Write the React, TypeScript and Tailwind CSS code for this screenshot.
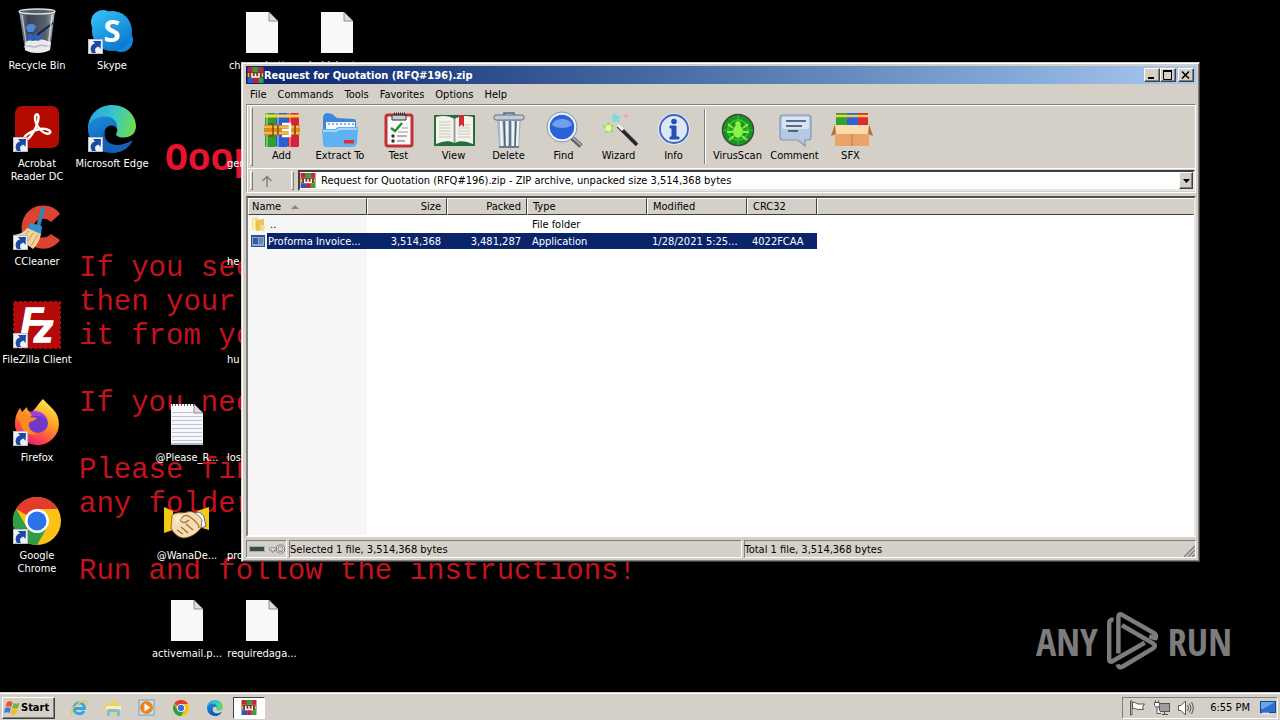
import React from "react";

type Kids = { children?: React.ReactNode };

const sunken = "border border-t-[#808080] border-l-[#808080] border-r-white border-b-white";
const raised =
  "border border-t-white border-l-white border-r-[#404040] border-b-[#404040] shadow-[inset_-1px_-1px_0_#808080]";

/* ---------- Desktop icons ---------- */

function Shortcut() {
  return (
    <g>
      <rect x="0.5" y="32.5" width="14" height="14" fill="#eef1f6" stroke="#b9bec8" />
      <path d="M4 46 C1.500 42 2.500 37.500 7 36.500 L5 34 L13 34 L12.500 42 L10.500 39.500 C7.500 40.500 6 42.500 8 46 Z" fill="#1d4aa0" />
    </g>
  );
}

function Art({ children }: Kids) {
  return (
    <svg viewBox="0 0 48 48" className="h-12 w-12 shrink-0 overflow-visible" aria-hidden="true">
      {children}
    </svg>
  );
}

function RecycleBin() {
  return (
    <Art>
      <defs>
        <linearGradient id="binBody">
          <stop offset="0" stopColor="#8e9aa8" />
          <stop offset="0.25" stopColor="#39434f" />
          <stop offset="0.75" stopColor="#566270" />
          <stop offset="1" stopColor="#aeb7c1" />
        </linearGradient>
      </defs>
      <path d="M6 4 L42 4 L37 43 C30 47 18 47 12 43 Z" fill="url(#binBody)" />
      <path d="M12 36 C16 31 22 35 26 33 C31 31 35 35 38 35 L37 43 C30 47 18 47 12 43 Z" fill="#e8eaec" />
      <path d="M11 40 C18 37 20 42 25 39 C30 37 33 40 37 39" fill="none" stroke="#b4b8bd" strokeWidth="1.5" />
      <path d="M13 21 C14 16 21 15 23 20 L20 25 L15 25 Z" fill="#4f86d8" />
      <path d="M20 31 C20 26 26 24 29 28 L26 34 Z M14 27 L19 27 L21 34 L15 33 Z" fill="#2d62bd" />
      <path d="M24 28 L40 16" stroke="#12233f" strokeWidth="2" />
      <ellipse cx="24" cy="4.5" rx="18" ry="2.5" fill="#56616e" stroke="#d9dee3" strokeWidth="1.3" />
      <path d="M9 8 L14 42" stroke="#dfe5ea" strokeWidth="1.3" opacity="0.7" />
      <path d="M39 8 L35 42" stroke="#f2f4f6" strokeWidth="1.6" opacity="0.7" />
    </Art>
  );
}

function Skype() {
  return (
    <Art>
      <defs>
        <linearGradient id="sky" x2="0.6" y2="1">
          <stop offset="0" stopColor="#37c3f5" />
          <stop offset="1" stopColor="#0b78d1" />
        </linearGradient>
      </defs>
      <circle cx="15" cy="15" r="12" fill="#2fb9f2" />
      <circle cx="33" cy="33" r="12" fill="#1187dc" />
      <circle cx="24" cy="24" r="20" fill="url(#sky)" />
      <text x="24" y="35" textAnchor="middle" fontSize="31" className="fill-white font-['Open_Sans',sans-serif] font-bold">S</text>
      <Shortcut />
    </Art>
  );
}

function Acrobat() {
  return (
    <Art>
      <rect x="2" y="1" width="44" height="42" rx="7" fill="#b30b00" />
      <path
        d="M12 34 C9 31 20 25 27 24 C35 23 40 27 36 28.500 C30 30 22 20 22 13 C22 8 26 8 25.500 13 C25 20 18 33 13.500 34.500 Z"
        fill="none"
        stroke="#fff"
        strokeWidth="2.4"
        strokeLinejoin="round"
      />
      <Shortcut />
    </Art>
  );
}

function EdgeShape() {
  return (
    <g>
      <defs>
        <linearGradient id="edgeTop" x1="0" y1="0.4" x2="1" y2="0.6">
          <stop offset="0" stopColor="#2ba6dc" />
          <stop offset="0.5" stopColor="#37c6c9" />
          <stop offset="1" stopColor="#72dc4c" />
        </linearGradient>
        <linearGradient id="edgeBot" x2="0.5" y2="1">
          <stop offset="0" stopColor="#1c8fdd" />
          <stop offset="1" stopColor="#0d58ad" />
        </linearGradient>
      </defs>
      <path d="M0 24 C0 9 11 0 24 0 C39 0 48 11 48 21 C48 29 42 32.500 36 32.500 C30 32.500 27 30.500 28.500 28 C31 24 28 18 20 18 C11 18 4 22 0 24 Z" fill="url(#edgeTop)" />
      <path d="M0 24 C1 15 10 11.500 17 11.500 C26 11.500 30 18 29 24 C27 19 18 19 16.500 27 C15 37 26 47 40 41 C36 46 30 48 24 48 C10 48 0 37 0 24 Z" fill="url(#edgeBot)" />
      <path d="M16.500 27 C15 37 26 45 43 36 C44 35 45 36 44 37 C38 47 27 49 20 46 C10 41 11 29 20 20 C18 22 17 24 16.500 27 Z" fill="#1660b4" />
    </g>
  );
}

function CCleaner() {
  return (
    <Art>
      <path d="M47 11 L38 19 C33 13 21 15 20 25 C20 34 31 38 38 31 L47 37 C40 48 24 48 15 40 C5 31 7 12 20 5 C30 0 42 3 47 11 Z" fill="#dc4430" />
      <path d="M30 6 L25 24" stroke="#2f83bf" strokeWidth="4" strokeLinecap="round" />
      <path d="M17 20 L29 23 L28 32 L14 27 Z" fill="#3692cf" />
      <path d="M14 25 L28 31 C27 37 24 42 20 46 L1 32 C7 31 11 29 14 25 Z" fill="#f2d49a" />
      <path d="M16 28 L8 37 M20 30 L13 41 M25 31 L18 43" stroke="#c69b56" strokeWidth="1" />
      <Shortcut />
    </Art>
  );
}

function FileZilla() {
  return (
    <Art>
      <rect x="1" y="1" width="46" height="46" fill="#b40a0a" stroke="#b40a0a" strokeWidth="2" strokeDasharray="3 2" />
      <text x="8" y="33" fontSize="36" strokeWidth="1.5" className="fill-white stroke-white font-['Liberation_Sans',sans-serif] font-bold italic">F</text>
      <text x="21" y="41" fontSize="38" strokeWidth="1.5" className="fill-white stroke-white font-['Liberation_Sans',sans-serif] font-bold italic">z</text>
      <Shortcut />
    </Art>
  );
}

function Firefox() {
  return (
    <Art>
      <defs>
        <linearGradient id="fox" x1="0.8" y1="0" x2="0.3" y2="1">
          <stop offset="0" stopColor="#fff04a" />
          <stop offset="0.45" stopColor="#ff9a26" />
          <stop offset="0.75" stopColor="#ff4b46" />
          <stop offset="1" stopColor="#e4197c" />
        </linearGradient>
      </defs>
      <path d="M30 0 C34 5 40 9 43 14 C47 21 47 31 42 37 C36 45 27 48 18 45 C8 42 2 34 2 25 C2 18 4 13 7 9 L9 13 L14 8 C14 11 16 13 19 13 C23 9 25 5 30 0 Z" fill="url(#fox)" />
      <circle cx="25" cy="24" r="10" fill="#7139c9" />
      <path d="M16 13 C24 10 33 14 34 21 C30 16 25 17 20 17 Z" fill="#9a3fe0" />
      <path d="M3 17 C8 14 14 15 17 18 L24 19 C22 22 18 22 16 24 C15 30 19 34 25 35 C15 38 8 32 8 24 Z" fill="#ff8a1f" />
      <Shortcut />
    </Art>
  );
}

function ChromeShape() {
  return (
    <g>
      <circle cx="24" cy="24" r="24" fill="#fbc116" />
      <path d="M24 24 L3.200 12 A24 24 0 0 1 44.800 12 L24 12 Z" fill="#e33b2e" />
      <path d="M3.200 12 A24 24 0 0 0 24 48 L34.400 30 L24 24 L13.600 30 Z" fill="#2c9f48" />
      <circle cx="24" cy="24" r="12" fill="#fff" />
      <circle cx="24" cy="24" r="9.500" fill="#2c73e8" />
    </g>
  );
}

function Page({ lined = false }: { lined?: boolean }) {
  return (
    <Art>
      <path d="M8 5 L31 5 L40 14 L40 46 L8 46 Z" fill="#f8f8f8" />
      <path d="M31 5 L40 14 L31 14 Z" fill="#dcdcdc" stroke="#777" strokeWidth="0.8" />
      {lined && (
        <g>
          <path d="M9 13.500 H30 M9 17.500 H39 M9 21.500 H39 M9 25.500 H39 M9 29.500 H39 M9 33.500 H39 M9 37.500 H39 M9 41.500 H39" stroke="#b7c4de" strokeWidth="1" />
          <path d="M9 6 H31" stroke="#555" strokeWidth="2" strokeDasharray="1 2" />
          <path d="M8 45 H40" stroke="#9aa3b4" strokeWidth="1.500" />
        </g>
      )}
    </Art>
  );
}

function Handshake() {
  return (
    <Art>
      <path d="M1 10 L10 14 L10 33 L1 36 Z" fill="#f2cb12" />
      <path d="M46 10 L34 14 L39 31 L46 33 Z" fill="#f2cb12" />
      <path d="M31 16 C35 14 39 16 41 20 L43 29 L38 31 Z" fill="#fff" stroke="#4b3a9a" strokeWidth="0.8" />
      <path d="M9 18 C15 14 20 17 24 15 C30 13 36 18 39 23 L38 31 C34 36 29 40 21 41 C16 41 10 36 8 31 Z" fill="#f6dcb0" stroke="#7b5227" strokeWidth="0.8" />
      <path d="M17 23 C20 18 24 17 27 20 C31 23 36 26 36 31 M14 33 L20 37 M18 30 L25 36 M23 27 L30 33 M17 23 C19 27 23 26 26 23" fill="none" stroke="#9b6c37" strokeWidth="1.200" />
      <path d="M11 20 C14 18 17 18 20 18 L14 28 Z" fill="#fdeccb" />
    </Art>
  );
}

type DesktopItem = { label: string; cell: string; art?: React.ReactNode; clipped?: boolean };

const items: DesktopItem[] = [
  { label: "Recycle Bin", cell: "col-start-1 row-start-1", art: <RecycleBin /> },
  { label: "Skype", cell: "col-start-2 row-start-1", art: <Skype /> },
  { label: "changebutt...", cell: "col-start-4 row-start-1", art: <Page /> },
  { label: "holdshort...", cell: "col-start-5 row-start-1", art: <Page /> },
  { label: "Acrobat\nReader DC", cell: "col-start-1 row-start-2", art: <Acrobat /> },
  { label: "Microsoft Edge", cell: "col-start-2 row-start-2", art: <Art><EdgeShape /><Shortcut /></Art> },
  { label: "gen", cell: "col-start-4 row-start-2", clipped: true },
  { label: "CCleaner", cell: "col-start-1 row-start-3", art: <CCleaner /> },
  { label: "he", cell: "col-start-4 row-start-3", clipped: true },
  { label: "FileZilla Client", cell: "col-start-1 row-start-4", art: <FileZilla /> },
  { label: "hu", cell: "col-start-4 row-start-4", clipped: true },
  { label: "Firefox", cell: "col-start-1 row-start-5", art: <Firefox /> },
  { label: "@Please_R...", cell: "col-start-3 row-start-5", art: <Page lined /> },
  { label: "los", cell: "col-start-4 row-start-5", clipped: true },
  { label: "Google\nChrome", cell: "col-start-1 row-start-6", art: <Art><ChromeShape /><Shortcut /></Art> },
  { label: "@WanaDe...", cell: "col-start-3 row-start-6", art: <Handshake /> },
  { label: "pro", cell: "col-start-4 row-start-6", clipped: true },
  { label: "activemail.p...", cell: "col-start-3 row-start-7", art: <Page /> },
  { label: "requiredaga...", cell: "col-start-4 row-start-7", art: <Page /> },
];

function DesktopIcons() {
  return (
    <div className="relative grid w-max auto-rows-[98px] grid-cols-[repeat(5,74px)] gap-x-px">
      {items.map((it) => (
        <button
          key={it.label}
          className={`flex flex-col items-center pt-[7px] text-white ${it.cell}`}
        >
          {it.art ?? <span className="h-12" />}
          <span
            className={`mt-1 whitespace-pre leading-[13px] ${it.clipped ? "self-start pl-[2px]" : "text-center"}`}
          >
            {it.label}
          </span>
        </button>
      ))}
    </div>
  );
}

/* ---------- Archive window icons ---------- */

function Books() {
  return (
    <g>
      <rect x="1" y="1" width="11" height="34" rx="1.500" fill="#2da12f" />
      <rect x="12" y="1" width="12" height="34" rx="1.500" fill="#2c5fd0" />
      <rect x="24" y="1" width="11" height="34" rx="1.500" fill="#d3233c" />
      <path d="M3 1 V35 M14 1 V35 M26 1 V35" stroke="#fff" strokeWidth="1.500" opacity="0.45" />
      <path d="M1 4 H35" stroke="#f5d648" strokeWidth="3" />
    </g>
  );
}

function RarSmall({ className }: { className: string }) {
  return (
    <svg viewBox="0 0 16 16" className={className} aria-hidden="true">
      <rect x="0" y="0" width="6" height="5" fill="#c32236" />
      <rect x="5" y="0" width="6" height="5" fill="#389b35" />
      <rect x="11" y="0" width="5" height="5" fill="#b92a4a" />
      <rect x="0" y="5" width="16" height="6" fill="#7a3a2a" />
      <rect x="0" y="11" width="6" height="5" fill="#2a59c4" />
      <rect x="6" y="11" width="5" height="5" fill="#c8202c" />
      <rect x="11" y="11" width="5" height="5" fill="#35a046" />
      <path d="M1 6 V10 M15 6 V10" stroke="#e4b93c" strokeWidth="1.500" />
      <path d="M4.500 6 V10 H11.500 V6 M8 6.500 V10" fill="none" stroke="#fff" strokeWidth="1.500" />
    </svg>
  );
}

const addArt = (
  <g>
    <Books />
    <rect x="0" y="13" width="36" height="10" fill="#d98a1c" />
    <path d="M0 15 H36 M0 21 H36" stroke="#f7c963" strokeWidth="1.500" />
    <path d="M4 12 L9 12 L9 24 L4 24 M14 13 V23" stroke="#8a4a0a" strokeWidth="1.500" fill="none" />
    <path d="M18 12 H26 V24 H18 M18 18 H25" fill="none" stroke="#fff" strokeWidth="2.500" />
    <path d="M31 13 V23" stroke="#9b540d" strokeWidth="2" />
  </g>
);

const extractArt = (
  <g>
    <path d="M1 6 Q1 1 6 1 L10 2 L15 6 L32 7 Q34 7 34 10 L34 20 H1 Z" fill="#3c87de" />
    <path d="M4 10 H33 V20 H4 Z" fill="#f7fbff" />
    <path d="M6 12 H32" stroke="#7d96ba" strokeWidth="1.500" strokeDasharray="2 2" />
    <path d="M0 17 H13 L16 15 H36 L35 31 Q34 35 31 35 H4 Q1 35 1 31 Z" fill="#5fb2f2" />
    <path d="M1 19 H14 L17 17 H35" stroke="#b7e1ff" strokeWidth="1.500" fill="none" />
    <rect x="22" y="28" width="10" height="3.500" fill="#dd3030" />
  </g>
);

const testArt = (
  <g>
    <rect x="5" y="3" width="26" height="31" rx="2" fill="#fafafa" stroke="#c32f38" strokeWidth="3" />
    <path d="M11 3 H25 V8 H11 Z" fill="#c9ccd0" stroke="#333" />
    <path d="M13 2 H24" stroke="#333" strokeWidth="3" strokeDasharray="1 1" />
    <path d="M10 16 L14 19 L21 11" stroke="#268d34" strokeWidth="2.500" fill="none" />
    <path d="M21 16 H27 M17 20 H27" stroke="#999" />
    <circle cx="12" cy="24" r="1.700" fill="#333" />
    <circle cx="12" cy="29" r="1.700" fill="#333" />
    <path d="M16 24 H26 M16 29 H24" stroke="#999" strokeWidth="1.500" />
  </g>
);

const viewArt = (
  <g>
    <rect x="-2" y="3" width="41" height="31" fill="#286c39" />
    <path d="M0 5 C7 3 14 4 18.500 7 V31 C13 28 7 29 0 32 Z M37 5 C30 3 23 4 18.500 7 V31 C24 28 30 29 37 32 Z" fill="#f4f4ee" />
    <path d="M18.500 7 V31" stroke="#9c9c94" strokeWidth="2" />
    <path d="M3 10 H15 M3 13 H15 M3 16 H15 M3 19 H15 M3 22 H15 M3 25 H15 M22 13 H34 M22 16 H34 M22 19 H34 M22 22 H34 M22 25 H34" stroke="#c6c6be" />
    <path d="M23 3 H28 V15 L25.500 12.500 L23 15 Z" fill="#d42832" />
  </g>
);

const deleteArt = (
  <g>
    <path d="M6 7 H30 L28 35 H8 Z" fill="#a6b6c8" />
    <path d="M10 9 L11 34 M16 9 V34 M22 9 V34 M27 9 L26 34" stroke="#eef3f8" strokeWidth="2.500" />
    <path d="M13 9 L14 34 M19 9 V34 M25 9 L24 34" stroke="#4f6077" strokeWidth="1.500" />
    <rect x="3" y="3" width="30" height="5" rx="2" fill="#c1ccd8" stroke="#5f7085" />
    <path d="M13 3 V1 H23 V3" fill="none" stroke="#56677c" strokeWidth="1.500" />
    <path d="M8 35 H28" stroke="#4f6077" strokeWidth="1.500" />
  </g>
);

const findArt = (
  <g>
    <path d="M26 26 L35 34" stroke="#5e6269" strokeWidth="5" />
    <path d="M26 25 L35 33" stroke="#b8bcc2" strokeWidth="1.500" />
    <circle cx="16" cy="15" r="13.500" fill="#2962d5" stroke="#eef2f8" strokeWidth="2.500" />
    <circle cx="16" cy="15" r="15" fill="none" stroke="#6b83b0" strokeWidth="0.800" />
    <path d="M6 13 C8 5 24 5 26 13 C22 17 10 17 6 13 Z" fill="#7ea9f2" opacity="0.850" />
  </g>
);

const wizardArt = (
  <g>
    <path d="M17 14 L36 33" stroke="#26262a" strokeWidth="3.500" />
    <path d="M17 13 L22 18" stroke="#f2f2f2" strokeWidth="3" />
    <path d="M23 17 L36 30" stroke="#8c8c90" strokeWidth="0.800" />
    <path d="M7 9 L9 13 L13 13 L11 17 L13 21 L8 19 L4 22 L5 17 L1 14 L6 13 Z" fill="#8fe05a" />
    <circle cx="7.500" cy="16" r="3" fill="#e9ff9f" />
    <path d="M14 1 L16 4 L20 4 L18 7 L19 11 L15 9 L11 11 L12 7 L10 4 Z" fill="#7ed9de" />
    <path d="M25 1 L26 3 L28 4 L26 5 L25 7 L24 5 L22 4 L24 3 Z" fill="#f2a3a9" />
  </g>
);

const infoArt = (
  <g>
    <circle cx="18" cy="17" r="16" fill="#dfe8f7" />
    <circle cx="18" cy="17" r="14" fill="#dce7f8" stroke="#3b62bd" strokeWidth="1.800" />
    <circle cx="18" cy="9.500" r="2.800" fill="#2850b4" />
    <path d="M14 14 H20 V25 H23 V27 H14 V25 H16 V16 H14 Z" fill="#2850b4" stroke="#2850b4" />
  </g>
);

const virusArt = (
  <g>
    <circle cx="18" cy="18" r="15.500" fill="#1c941f" stroke="#3a4a3c" strokeWidth="1.500" />
    <circle cx="18" cy="18" r="10" fill="none" stroke="#37c434" strokeWidth="1.500" />
    <path d="M3 18 H33 M18 3 V33" stroke="#35bf36" />
    <ellipse cx="18" cy="19.500" rx="5" ry="6.500" fill="#8af04a" />
    <circle cx="18" cy="12" r="2.800" fill="#8af04a" />
    <path d="M13 16 L8 12 M23 16 L28 12 M13 20 H7 M23 20 H29 M14 24 L9 28 M22 24 L27 28" stroke="#8af04a" strokeWidth="1.800" />
  </g>
);

const commentArt = (
  <g>
    <path d="M6 3 H31 Q34 3 34 6 V25 Q34 28 31 28 H28 V34 L21 28 H6 Q3 28 3 25 V6 Q3 3 6 3 Z" fill="#b6c9e2" stroke="#8296b5" strokeWidth="1.200" />
    <rect x="5" y="5" width="27" height="12" rx="2" fill="#d8e4f3" />
    <path d="M9 9 H29 M9 14 H25 M11 19 H21" stroke="#33435e" strokeWidth="1.500" />
  </g>
);

const sfxArt = (
  <g>
    <rect x="3" y="1" width="11" height="13" fill="#2ea332" />
    <rect x="14" y="1" width="11" height="13" fill="#2d62d5" />
    <rect x="25" y="1" width="10" height="13" fill="#d92a3a" />
    <path d="M3 4 H35" stroke="#f6cf3b" strokeWidth="2.500" />
    <path d="M2 13 H36 V34 H2 Z" fill="#eba36a" />
    <path d="M2 13 H36 L38 22 H19 H0 Z" fill="#fadcab" />
    <path d="M2 12 L-2 24 L3 22 Z M36 12 L40 24 L35 22 Z" fill="#b96f3c" />
    <path d="M19 22 V34" stroke="#c27a45" />
  </g>
);

type Tool = { label: string; width: string; art: React.ReactNode };

const mainTools: Tool[] = [
  { label: "Add", width: "w-[55px]", art: addArt },
  { label: "Extract To", width: "w-[62px]", art: extractArt },
  { label: "Test", width: "w-[55px]", art: testArt },
  { label: "View", width: "w-[55px]", art: viewArt },
  { label: "Delete", width: "w-[55px]", art: deleteArt },
  { label: "Find", width: "w-[55px]", art: findArt },
  { label: "Wizard", width: "w-[55px]", art: wizardArt },
  { label: "Info", width: "w-[55px]", art: infoArt },
];

const extraTools: Tool[] = [
  { label: "VirusScan", width: "w-[57px]", art: virusArt },
  { label: "Comment", width: "w-[57px]", art: commentArt },
  { label: "SFX", width: "w-[55px]", art: sfxArt },
];

function ToolButton({ label, width, art }: Tool) {
  return (
    <button className={`flex shrink-0 flex-col items-center pt-[7px] ${width}`}>
      <svg viewBox="0 0 36 36" className="h-9 w-9 overflow-visible" aria-hidden="true">
        {art}
      </svg>
      <span className="whitespace-nowrap leading-4">{label}</span>
    </button>
  );
}

function Grip() {
  return <span className="my-[2px] w-[3px] shrink-0 border border-t-white border-l-white border-r-[#808080] border-b-[#808080]" />;
}

/* ---------- Archive window ---------- */

function WindowButton({ label, children }: { label: string } & Kids) {
  return (
    <button aria-label={label} className={`flex h-[14px] w-4 items-center justify-center bg-[#d4d0c8] ${raised}`}>
      <svg viewBox="0 0 12 10" className="h-[10px] w-3" fill="none" stroke="#000" aria-hidden="true">
        {children}
      </svg>
    </button>
  );
}

function TitleBar() {
  return (
    <div className="flex h-[18px] shrink-0 items-center bg-linear-to-r from-[#0a246a] to-[#a6caf0] pr-[2px]">
      <RarSmall className="ml-px h-4 w-[17px] shrink-0" />
      <h1 className="flex-1 truncate font-['DejaVu_Sans_Condensed','DejaVu_Sans',sans-serif] text-[11px] font-bold text-white">
        Request for Quotation (RFQ#196).zip
      </h1>
      <div className="flex">
        <WindowButton label="Minimize"><path d="M2 8 H8" strokeWidth="2" /></WindowButton>
        <WindowButton label="Maximize"><path d="M1.500 1 V9.500 H9.500 V1" /><path d="M1 1 H10" strokeWidth="2" /></WindowButton>
        <span className="w-[2px]" />
        <WindowButton label="Close"><path d="M2 1.500 L9 8.500 M9 1.500 L2 8.500" strokeWidth="1.600" /></WindowButton>
      </div>
    </div>
  );
}

const headCell =
  "h-[17px] border border-t-white border-l-white border-r-[#404040] border-b-[#404040] bg-[#d4d0c8] p-0 font-normal";

function FileTable() {
  return (
    <div className="flex min-h-0 flex-1 flex-col border-2 border-t-[#505050] border-r-[#e8e6e0] border-b-white border-l-[#808080] bg-[linear-gradient(to_right,#f6f6f6_119px,#ffffff_119px)]">
      <table className="w-full table-fixed border-separate border-spacing-0 leading-[15px]">
        <colgroup>
          <col className="w-[119px]" />
          <col className="w-20" />
          <col className="w-20" />
          <col className="w-[120px]" />
          <col className="w-[100px]" />
          <col className="w-[70px]" />
          <col />
        </colgroup>
        <thead>
          <tr>
            <th className={`${headCell} pl-[3px] text-left`}>
              <span className="flex items-center gap-[10px]">
                Name
                <svg viewBox="0 0 8 4" className="h-1 w-2" aria-hidden="true">
                  <path d="M0 4 L4 0 L8 4 Z" fill="#8a8782" />
                </svg>
              </span>
            </th>
            <th className={`${headCell} pr-[5px] text-right`}>Size</th>
            <th className={`${headCell} pr-[5px] text-right`}>Packed</th>
            <th className={`${headCell} pl-[5px] text-left`}>Type</th>
            <th className={`${headCell} pl-[5px] text-left`}>Modified</th>
            <th className={`${headCell} pl-[5px] text-left`}>CRC32</th>
            <td className={`${headCell} border-r-[#d4d0c8]`} />
          </tr>
        </thead>
        <tbody>
          <tr className="h-[18px]">
            <td className="p-0">
              <span className="flex items-center gap-[3px] pl-[3px]">
                <svg viewBox="0 0 16 16" className="h-4 w-4" aria-hidden="true">
                  <path d="M1 2 L7 1 L7 13 L1 14 Z" fill="#f7e08a" />
                  <path d="M5 4 L13 3 L13 14 L5 15 Z" fill="#e9c552" />
                  <path d="M10 8 L14 10 L13 15 L9 15 Z" fill="#f5dd8b" />
                  <path d="M3 3 V13" stroke="#fff7cf" strokeWidth="1.500" />
                </svg>
                ..
              </span>
            </td>
            <td />
            <td />
            <td className="py-0 pr-0 pl-[5px]">File folder</td>
            <td />
            <td />
            <td />
          </tr>
          <tr className="h-4 text-white">
            <td className="p-0">
              <span className="flex h-4 items-center">
                <span className="flex w-[19px] justify-center">
                  <svg viewBox="0 0 14 12" className="h-3 w-[14px]" aria-hidden="true">
                    <rect width="14" height="12" fill="#31518c" />
                    <rect x="1" y="2" width="12" height="9" fill="#8ba6d0" />
                    <rect x="2" y="3" width="5" height="6" fill="#2e5da8" />
                    <path d="M8 4 H12 M8 6 H12 M8 8 H11" stroke="#3e5f9a" />
                  </svg>
                </span>
                <span className="flex h-4 flex-1 items-center bg-[#0a246a] pl-px whitespace-nowrap">Proforma Invoice...</span>
              </span>
            </td>
            <td className="bg-[#0a246a] py-0 pr-[6px] pl-0 text-right">3,514,368</td>
            <td className="bg-[#0a246a] py-0 pr-[6px] pl-0 text-right">3,481,287</td>
            <td className="bg-[#0a246a] py-0 pr-0 pl-[5px]">Application</td>
            <td className="bg-[#0a246a] py-0 pr-0 pl-[5px] whitespace-nowrap">1/28/2021 5:25...</td>
            <td className="bg-[#0a246a] py-0 pr-0 pl-[5px]">4022FCAA</td>
            <td />
          </tr>
        </tbody>
      </table>
    </div>
  );
}

function StatusBar() {
  return (
    <div className="mt-[3px] flex h-[18px] shrink-0 gap-[2px] leading-[18px]">
      <div className={`flex w-[41px] items-center gap-1 pl-[2px] ${sunken}`}>
        <svg viewBox="0 0 16 8" className="h-2 w-4" aria-hidden="true">
          <rect x="0.500" y="1.500" width="15" height="5" fill="#3e4a4c" stroke="#9fb2b2" />
        </svg>
        <svg viewBox="0 0 16 10" className="h-[10px] w-4" aria-hidden="true">
          <path d="M0 4 H8 V6 H5 V8 H3 V6 H0 Z" fill="#f4f4f4" stroke="#5c5c5c" strokeWidth="0.700" />
          <circle cx="11.500" cy="5" r="3.500" fill="#d4d0c8" stroke="#5c5c5c" strokeWidth="2.200" />
          <circle cx="11.500" cy="5" r="3.500" fill="none" stroke="#f4f4f4" />
        </svg>
      </div>
      <div className={`flex-1 ${sunken}`}>Selected 1 file, 3,514,368 bytes</div>
      <div className={`flex flex-1 justify-between ${sunken}`}>
        Total 1 file, 3,514,368 bytes
        <svg viewBox="0 0 12 12" className="h-3 w-3 self-end" stroke="#808080" strokeWidth="1.500" aria-hidden="true">
          <path d="M1 12 L12 1 M5 12 L12 5 M9 12 L12 9" />
        </svg>
      </div>
    </div>
  );
}

function ArchiveWindow() {
  return (
    <section
      aria-label="Archive window"
      className="absolute top-[62px] left-[241px] flex h-[500px] w-[959px] flex-col border border-t-[#d4d0c8] border-r-[#404040] border-b-[#404040] border-l-[#d4d0c8] bg-[#d4d0c8] p-[3px] pl-1 shadow-[inset_1px_1px_0_#ffffff,inset_-1px_-1px_0_#808080]"
    >
      <TitleBar />
      <nav className="flex h-[20px] shrink-0 items-center gap-[11px] pl-1">
        {["File", "Commands", "Tools", "Favorites", "Options", "Help"].map((m) => (
          <button key={m}>{m}</button>
        ))}
      </nav>
      <div className="shrink-0 border border-t-[#808080] border-r-white border-b-white border-l-[#a8a49c] shadow-[inset_1px_1px_0_#ffffff]">
        <div className="flex h-[63px] pl-[3px]">
          <Grip />
          <span className="w-px" />
          {mainTools.map((t) => (
            <ToolButton key={t.label} {...t} />
          ))}
          <span className="mx-[3px] my-1 w-[2px] border-l border-l-[#808080] bg-white" />
          {extraTools.map((t) => (
            <ToolButton key={t.label} {...t} />
          ))}
        </div>
        <div className="flex h-6 items-center border-t border-t-white pl-[3px]">
          <div className="flex h-full w-[41px] shrink-0">
            <Grip />
            <button aria-label="Up one level" className="flex flex-1 items-center pl-[8px]">
              <svg viewBox="0 0 12 12" className="h-3 w-3" fill="none" stroke="#808080" strokeWidth="1.500" aria-hidden="true">
                <path d="M6 12 V1.500 M1.500 6 L6 1.500 L10.500 6" />
              </svg>
            </button>
          </div>
          <div className="flex h-full shrink-0"><Grip /></div>
          <div className="ml-[4px] flex h-[21px] min-w-0 flex-1 items-center border-2 border-t-[#404040] border-r-[#e8e6e0] border-b-[#e8e6e0] border-l-[#404040] bg-white">
            <RarSmall className="h-[15px] w-4 shrink-0" />
            <select
              aria-label="Archive path"
              className="h-full min-w-0 flex-1 appearance-none bg-white pl-[5px] leading-[17px] outline-none"
            >
              <option>Request for Quotation (RFQ#196).zip - ZIP archive, unpacked size 3,514,368 bytes</option>
            </select>
            <span className={`flex h-full w-[14px] shrink-0 items-center justify-center bg-[#d4d0c8] ${raised}`}>
              <svg viewBox="0 0 7 4" className="h-1 w-[7px]" aria-hidden="true">
                <path d="M0 0 H7 L3.500 4 Z" />
              </svg>
            </span>
          </div>
        </div>
      </div>
      <div className="h-[3px] shrink-0" />
      <FileTable />
      <StatusBar />
    </section>
  );
}

/* ---------- Wallpaper and watermark ---------- */

function Wallpaper() {
  return (
    <div className="absolute top-[140px] left-[79px] whitespace-pre font-['Liberation_Mono',monospace] text-[29px] leading-[34px] text-[#c4121f]">
      <p className="pl-[86px] text-[38px] leading-[40px] font-bold text-[#e8132c]">Ooop</p>
      <div className="mt-[72px] flex flex-col gap-[33px]">
        <p>{"If you see\nthen your\nit from yo"}</p>
        <p>If you nee</p>
        <p>{"Please fin\nany folder"}</p>
        <p>Run and follow the instructions!</p>
      </div>
    </div>
  );
}

function Watermark() {
  return (
    <div className="absolute right-[48px] bottom-[20px] flex items-center gap-[8px] font-['Open_Sans_Condensed','Liberation_Sans_Narrow','Open_Sans',sans-serif] text-[38px] leading-[62px] font-light text-[#7c7c7c]">
      <span>ANY</span>
      <svg viewBox="268 55 170 195" className="h-[62px] w-[54px]" fill="none" stroke="#7c7c7c" strokeWidth="14" strokeLinejoin="round" aria-hidden="true">
        <path d="M292 86 Q278 84 278 98 V212 Q280 222 292 214 L390 158" />
        <path d="M307 192 V76 Q308 64 320 71 L420 128 Q428 134 424 144 L404 138" />
        <path d="M318 103 L416 160 Q428 168 416 176 L322 232 Q308 240 305 226" />
      </svg>
      <span>RUN</span>
    </div>
  );
}

/* ---------- Taskbar ---------- */

function QuickLaunch({ label, active = false, children }: { label: string; active?: boolean } & Kids) {
  return (
    <button
      aria-label={label}
      className={`flex h-[22px] w-8 items-center justify-center ${
        active
          ? "border border-t-[#404040] border-r-white border-b-white border-l-[#404040] bg-white"
          : ""
      }`}
    >
      {children}
    </button>
  );
}

function Taskbar() {
  return (
    <footer className="relative flex h-7 shrink-0 items-center border-t border-t-[#d4d0c8] bg-[#d4d0c8] px-[2px] shadow-[inset_0_1px_0_#ffffff]">
      <button className={`mt-[2px] flex h-[22px] w-[53px] items-center gap-px bg-[#d4d0c8] pl-px font-bold ${raised}`}>
        <svg viewBox="0 0 16 16" className="h-4 w-4 shrink-0" aria-hidden="true">
          <path d="M3 2 C5 1 7 1 8.500 2.500 L7 7.500 C5.500 6 3.500 6 1.500 7 Z" fill="#e8562a" />
          <path d="M9.500 3 C11 4 13 4 15.500 3 L14 8 C12 9 10 9 8 8 Z" fill="#78b535" />
          <path d="M1.200 8 C3.500 7 5 7 6.800 8.500 L5.500 13 C4 12 2 12 0 13 Z" fill="#3c7dd2" />
          <path d="M7.800 9 C9.500 10 11.500 10 13.700 9 L12.500 14 C10.500 15 8 15 6.300 13.800 Z" fill="#f4bd26" />
        </svg>
        Start
      </button>
      <nav className="mt-[2px] ml-2 flex gap-[2px]">
        <QuickLaunch label="Internet Explorer">
          <svg viewBox="0 0 18 18" className="h-[18px] w-[18px]" fill="none" aria-hidden="true">
            <path d="M4 9.500 H14.500 C14.500 2 4 2 4 9.500 C4 15.500 12 16 14 12" stroke="#35a6e2" strokeWidth="2.800" />
            <path d="M2 15.500 C-1 10 12 0 16.500 2.500 C17.500 3.500 17 5 16.500 6" stroke="#eac548" strokeWidth="1.300" />
          </svg>
        </QuickLaunch>
        <QuickLaunch label="File Explorer">
          <svg viewBox="0 0 18 18" className="h-[18px] w-[18px]" aria-hidden="true">
            <path d="M1 4 H7 L8 2 H13 L14 5 H16 V15 H1 Z" fill="#edcf6d" />
            <path d="M2 7 H17 V11 H2 Z" fill="#fbeeb5" />
            <path d="M3 17 V12 Q3 10 5 10 H14 Q16 10 16 12 V17 H13 V13 H6 V17 Z" fill="#79bce4" />
          </svg>
        </QuickLaunch>
        <QuickLaunch label="Media Player">
          <svg viewBox="0 0 18 18" className="h-[18px] w-[18px]" aria-hidden="true">
            <rect x="1" y="1" width="15" height="15" fill="#cfe4f3" stroke="#6b9fc4" />
            <circle cx="8.500" cy="8.500" r="6.500" fill="#ef8418" />
            <path d="M6.500 4.500 L12.500 8.500 L6.500 12.500 Z" fill="#fff" />
          </svg>
        </QuickLaunch>
        <QuickLaunch label="Google Chrome">
          <svg viewBox="0 0 48 48" className="h-4 w-4" aria-hidden="true"><ChromeShape /></svg>
        </QuickLaunch>
        <QuickLaunch label="Microsoft Edge">
          <svg viewBox="0 0 48 48" className="h-4 w-4" aria-hidden="true"><EdgeShape /></svg>
        </QuickLaunch>
        <QuickLaunch label="WinRAR" active>
          <RarSmall className="h-[15px] w-4" />
        </QuickLaunch>
      </nav>
      <div className={`mt-[2px] ml-auto flex h-[22px] items-center pl-[6px] ${sunken}`}>
        <svg viewBox="0 0 16 16" className="h-4 w-4" fill="#fff" stroke="#555" aria-hidden="true">
          <path d="M1.500 1 H3 V15 H1.500 Z" />
          <path d="M3.500 2.500 C6 1.500 7 4 9.500 4 H15.500 L13.500 7 L14.500 9.500 H9.500 C7 9.500 6 7.500 3.500 8.500 Z" />
        </svg>
        <svg viewBox="0 0 16 16" className="ml-[9px] h-4 w-4" fill="#fff" stroke="#555" aria-hidden="true">
          <rect x="5.500" y="3.500" width="10" height="8" fill="#9c9c9c" />
          <path d="M8 14.500 H14 M10.500 12 V14" />
          <path d="M0.500 2.500 H5.500 V5.500 Q5.500 7 3 7 Q0.500 7 0.500 5.500 Z M1.500 0.500 V2.500 M4.500 0.500 V2.500 M3 7 V13.500 H7" />
        </svg>
        <svg viewBox="0 0 16 16" className="ml-[8px] h-4 w-4" fill="none" stroke="#555" aria-hidden="true">
          <path d="M0.500 5.500 H3 L7.500 1 V15 L3 10.500 H0.500 Z" fill="#fff" />
          <path d="M9.500 5 Q11.500 8 9.500 11 M11.500 3.500 Q14.500 8 11.500 12.500 M13.500 2 Q17 8 13.500 14" />
        </svg>
        <time className="ml-[16px] whitespace-nowrap">6:55 PM</time>
        <svg viewBox="0 0 16 14" className="mr-px ml-[10px] h-[14px] w-4" aria-hidden="true">
          <rect x="0.500" y="0.500" width="15" height="11" fill="#2b6fcf" stroke="#17458f" />
          <path d="M1 1 H15 L3 8 H1 Z" fill="#6aa6ea" />
          <path d="M2 12.500 H9" stroke="#dfe9f5" strokeWidth="2" />
        </svg>
      </div>
    </footer>
  );
}

export default function App() {
  return (
    <div className="flex h-screen w-full cursor-default flex-col overflow-hidden bg-black font-['DejaVu_Sans_Condensed','DejaVu_Sans',sans-serif] text-[11px] leading-[13px] text-black">
      <main className="relative min-h-0 flex-1 overflow-hidden">
        <Wallpaper />
        <DesktopIcons />
        <Watermark />
        <ArchiveWindow />
      </main>
      <Taskbar />
    </div>
  );
}
